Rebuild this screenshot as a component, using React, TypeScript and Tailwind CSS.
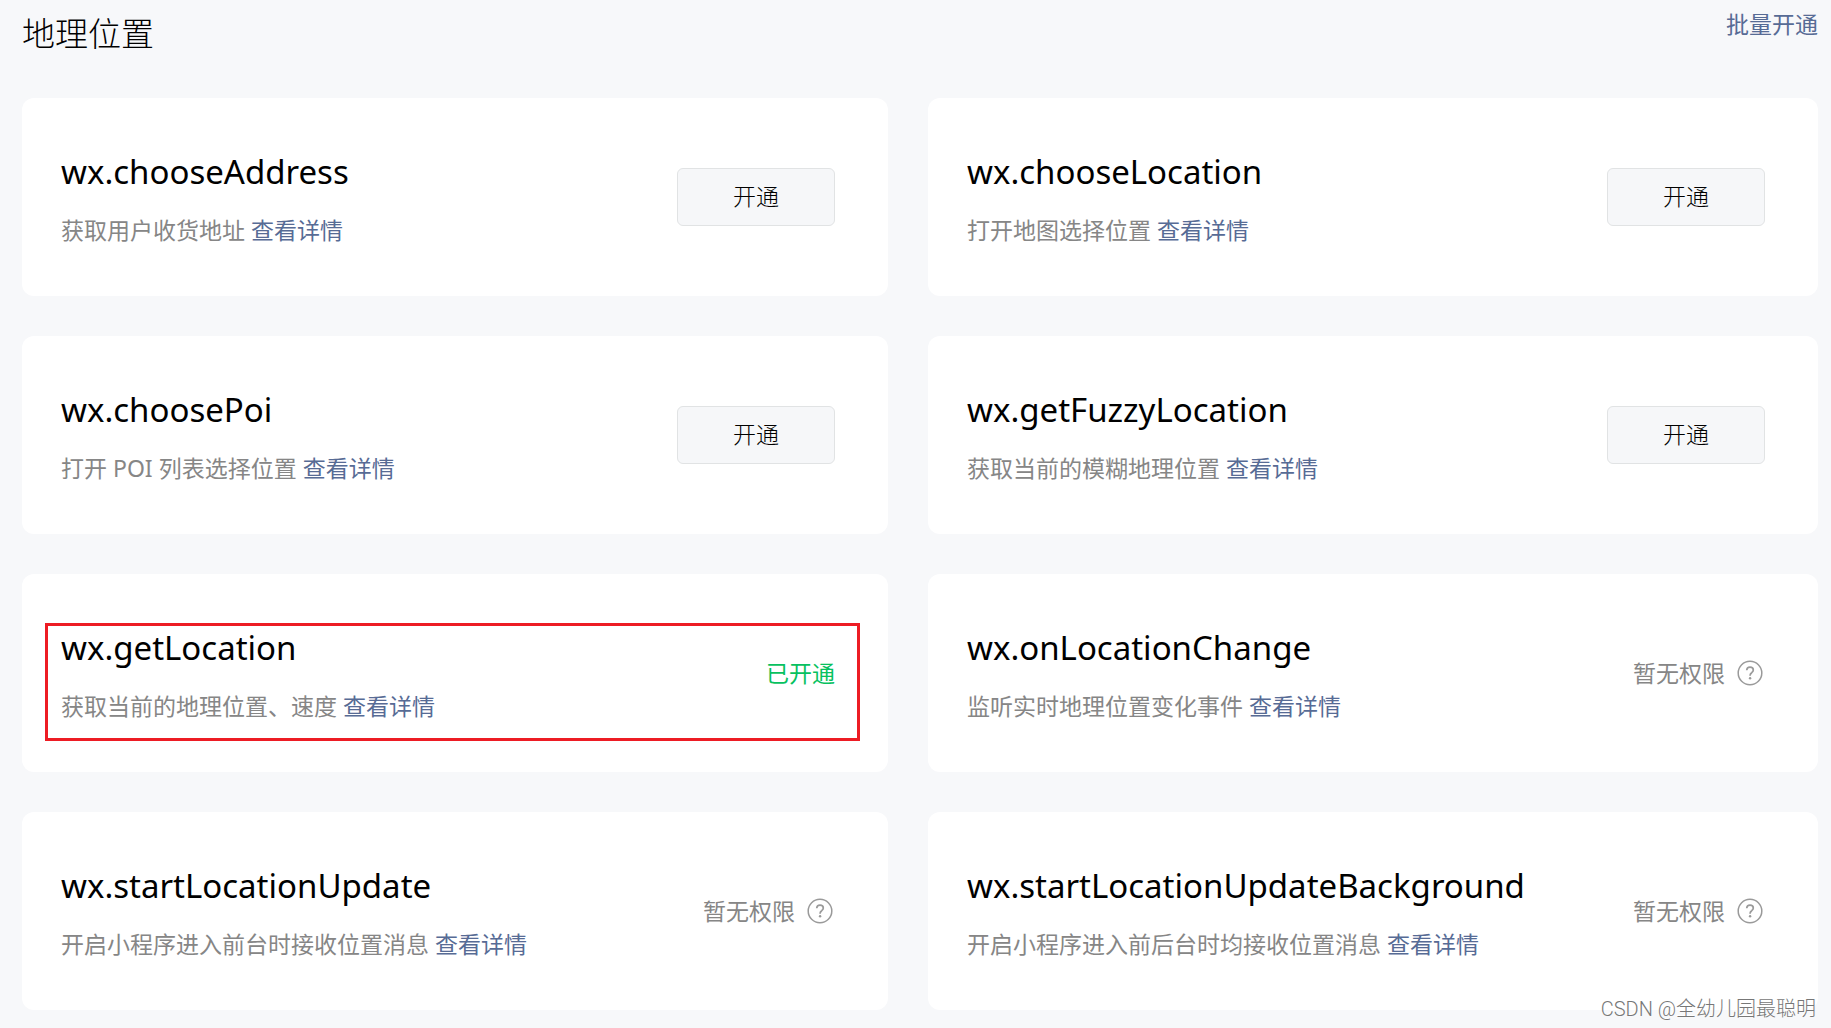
/**
 * 接口设置 - 地理位置
 */
type ApiStatus = 'available' | 'enabled' | 'denied';

interface ApiItem {
  name: string;
  desc: string;
  status: ApiStatus;
  highlighted?: boolean;
}

const API_LIST: ApiItem[] = [
  { name: 'wx.chooseAddress', desc: '获取用户收货地址', status: 'available' },
  { name: 'wx.chooseLocation', desc: '打开地图选择位置', status: 'available' },
  { name: 'wx.choosePoi', desc: '打开 POI 列表选择位置', status: 'available' },
  { name: 'wx.getFuzzyLocation', desc: '获取当前的模糊地理位置', status: 'available' },
  { name: 'wx.getLocation', desc: '获取当前的地理位置、速度', status: 'enabled', highlighted: true },
  { name: 'wx.onLocationChange', desc: '监听实时地理位置变化事件', status: 'denied' },
  { name: 'wx.startLocationUpdate', desc: '开启小程序进入前台时接收位置消息', status: 'denied' },
  { name: 'wx.startLocationUpdateBackground', desc: '开启小程序进入前后台时均接收位置消息', status: 'denied' },
];

function HelpIcon() {
  return (
    <svg
      width="26"
      height="26"
      viewBox="0 0 26 26"
      fill="none"
      stroke="#9a9a9a"
      strokeWidth="1.5"
      aria-hidden="true"
    >
      <circle cx="13" cy="13" r="11.8" />
      <path d="M9.7 10.2c.1-1.8 1.4-3 3.3-3s3.3 1.2 3.3 2.9c0 1.2-.6 1.8-1.6 2.6-1.1.8-1.6 1.4-1.6 2.6v.5" strokeWidth="1.7" />
      <circle cx="13.1" cy="18.2" r="1.2" fill="#9a9a9a" stroke="none" />
    </svg>
  );
}

function StatusAction({ status }: { status: ApiStatus }) {
  if (status === 'available') {
    return (
      <button
        type="button"
        className="h-[58px] w-[158px] cursor-pointer rounded-md border border-[#e1e3e4] bg-[#f6f7f9] pb-0.5 text-[23px] font-light text-black"
      >
        开通
      </button>
    );
  }
  if (status === 'enabled') {
    return <span className="text-[#07c160]">已开通</span>;
  }
  return (
    <span className="flex items-center gap-3 pr-0.5 text-[#868686]">
      暂无权限
      <button type="button" aria-label="权限说明" className="cursor-pointer">
        <HelpIcon />
      </button>
    </span>
  );
}

function ApiCard({ item }: { item: ApiItem }) {
  return (
    <li className="relative flex items-center justify-between rounded-xl bg-white py-[49px] pr-[53px] pl-[39px]">
      <div>
        <h3 className="text-[33px] leading-[50px] text-black">{item.name}</h3>
        <p className="mt-4 text-[23px] leading-[34px] text-[#868686]">
          {item.desc}{' '}
          <a href="#" className="text-[#576b95]">
            查看详情
          </a>
        </p>
      </div>
      <div className="shrink-0 text-[23px] leading-[34px]">
        <StatusAction status={item.status} />
      </div>
      {/* 红框标注 */}
      {item.highlighted && (
        <div className="pointer-events-none absolute top-[49px] right-7 bottom-[31px] left-[23px] border-3 border-[#ed1c24]" />
      )}
    </li>
  );
}

export default function App() {
  return (
    <main className="relative min-h-screen bg-[#f7f8fa] pt-2 pr-[13px] pb-[18px] pl-[22px] font-['Noto_Sans','Noto_Sans_CJK_SC',sans-serif]">
      <header className="flex items-start justify-between">
        <h2 className="text-[33px] leading-[52px] font-light text-black">地理位置</h2>
        <button type="button" className="cursor-pointer text-[23px] leading-8 text-[#576b95]">
          批量开通
        </button>
      </header>
      <ul className="mt-[38px] grid grid-cols-[866fr_890fr] gap-10">
        {API_LIST.map((item) => (
          <ApiCard key={item.name} item={item} />
        ))}
      </ul>
      <p className="absolute right-[15px] bottom-1 font-['Roboto','Noto_Sans_CJK_SC',sans-serif] text-[20px] leading-[30px] font-light text-[#777777] [text-shadow:-1px_-1px_0_#ffffff]">
        CSDN @全幼儿园最聪明
      </p>
    </main>
  );
}
